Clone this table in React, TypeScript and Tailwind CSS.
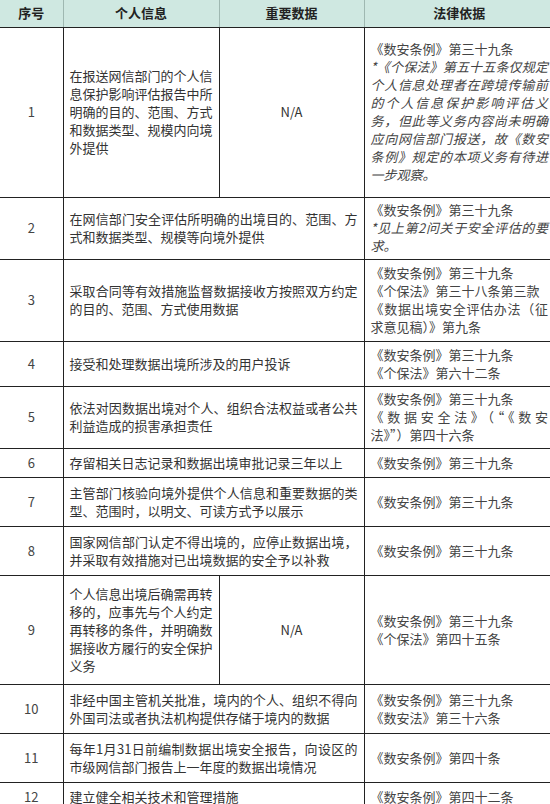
import React from "react";

type Row = {
  no: string;
  info: string;
  data?: string;
  law: React.ReactNode;
  h: string;
};

const rows: Row[] = [
  {
    no: "1",
    info: "在报送网信部门的个人信息保护影响评估报告中所明确的目的、范围、方式和数据类型、规模内向境外提供",
    data: "N/A",
    law: (
      <>
        <div>《数安条例》第三十九条</div>
        <div className="italic">
          *《个保法》第五十五条仅规定个人信息处理者在跨境传输前的个人信息保护影响评估义务，但此等义务内容尚未明确应向网信部门报送，故《数安条例》规定的本项义务有待进一步观察。
        </div>
      </>
    ),
    h: "h-[170px]",
  },
  {
    no: "2",
    info: "在网信部门安全评估所明确的出境目的、范围、方式和数据类型、规模等向境外提供",
    law: (
      <>
        <div>《数安条例》第三十九条</div>
        <div className="italic">*见上第2问关于安全评估的要求。</div>
      </>
    ),
    h: "h-[62px]",
  },
  {
    no: "3",
    info: "采取合同等有效措施监督数据接收方按照双方约定的目的、范围、方式使用数据",
    law: (
      <>
        <div>《数安条例》第三十九条</div>
        <div>《个保法》第三十八条第三款</div>
        <div>《数据出境安全评估办法（征求意见稿）》第九条</div>
      </>
    ),
    h: "h-[82px]",
  },
  {
    no: "4",
    info: "接受和处理数据出境所涉及的用户投诉",
    law: (
      <>
        <div>《数安条例》第三十九条</div>
        <div>《个保法》第六十二条</div>
      </>
    ),
    h: "h-[45px]",
  },
  {
    no: "5",
    info: "依法对因数据出境对个人、组织合法权益或者公共利益造成的损害承担责任",
    law: (
      <>
        <div>《数安条例》第三十九条</div>
        <div className="[text-align-last:justify]">《数据安全法》（“《数安</div>
        <div>法》”）第四十六条</div>
      </>
    ),
    h: "h-[62px]",
  },
  {
    no: "6",
    info: "存留相关日志记录和数据出境审批记录三年以上",
    law: <div>《数安条例》第三十九条</div>,
    h: "h-[29px]",
  },
  {
    no: "7",
    info: "主管部门核验向境外提供个人信息和重要数据的类型、范围时，以明文、可读方式予以展示",
    law: <div>《数安条例》第三十九条</div>,
    h: "h-[49px]",
  },
  {
    no: "8",
    info: "国家网信部门认定不得出境的，应停止数据出境，并采取有效措施对已出境数据的安全予以补救",
    law: <div>《数安条例》第三十九条</div>,
    h: "h-[49px]",
  },
  {
    no: "9",
    info: "个人信息出境后确需再转移的，应事先与个人约定再转移的条件，并明确数据接收方履行的安全保护义务",
    data: "N/A",
    law: (
      <>
        <div>《数安条例》第三十九条</div>
        <div>《个保法》第四十五条</div>
      </>
    ),
    h: "h-[109px]",
  },
  {
    no: "10",
    info: "非经中国主管机关批准，境内的个人、组织不得向外国司法或者执法机构提供存储于境内的数据",
    law: (
      <>
        <div>《数安条例》第三十九条</div>
        <div>《数安法》第三十六条</div>
      </>
    ),
    h: "h-[49px]",
  },
  {
    no: "11",
    info: "每年1月31日前编制数据出境安全报告，向设区的市级网信部门报告上一年度的数据出境情况",
    law: <div>《数安条例》第四十条</div>,
    h: "h-[49px]",
  },
  {
    no: "12",
    info: "建立健全相关技术和管理措施",
    law: <div>《数安条例》第四十二条</div>,
    h: "h-[29px]",
  },
];

export default function App() {
  return (
    <div
      className="w-[550px] h-[804px] overflow-hidden bg-white text-[13px] leading-[18px] text-[#333]"
      style={{ fontFamily: '"Noto Sans CJK SC", "Noto Sans", sans-serif' }}
    >
      <table className="w-[554px] table-fixed border-collapse">
        <colgroup>
          <col className="w-[63px]" />
          <col className="w-[156px]" />
          <col className="w-[145px]" />
          <col className="w-[190px]" />
        </colgroup>
        <thead>
          <tr className="h-[27px] bg-[#cfe8e1] font-bold text-[#222]">
            <th className="border-b border-b-[#222] border-r border-r-[#9fb8b1] text-center">序号</th>
            <th className="border-b border-b-[#222] border-r border-r-[#9fb8b1] text-center">个人信息</th>
            <th className="border-b border-b-[#222] border-r border-r-[#9fb8b1] text-center">重要数据</th>
            <th className="border-b border-b-[#222] text-center">法律依据</th>
          </tr>
        </thead>
        <tbody>
          {rows.map((r) => (
            <tr key={r.no} className={r.h}>
              <td className="border-b border-r border-[#222] text-center align-middle text-[#444]">{r.no}</td>
              {r.data ? (
                <>
                  <td className="border-b border-r border-[#222] px-[6px] align-middle text-justify">{r.info}</td>
                  <td className="border-b border-r border-[#222] text-center align-middle">{r.data}</td>
                </>
              ) : (
                <td colSpan={2} className="border-b border-r border-[#222] px-[6px] align-middle text-justify">
                  {r.info}
                </td>
              )}
              <td className="border-b border-[#222] px-[6px] align-middle text-justify text-[#444]">{r.law}</td>
            </tr>
          ))}
        </tbody>
      </table>
    </div>
  );
}
